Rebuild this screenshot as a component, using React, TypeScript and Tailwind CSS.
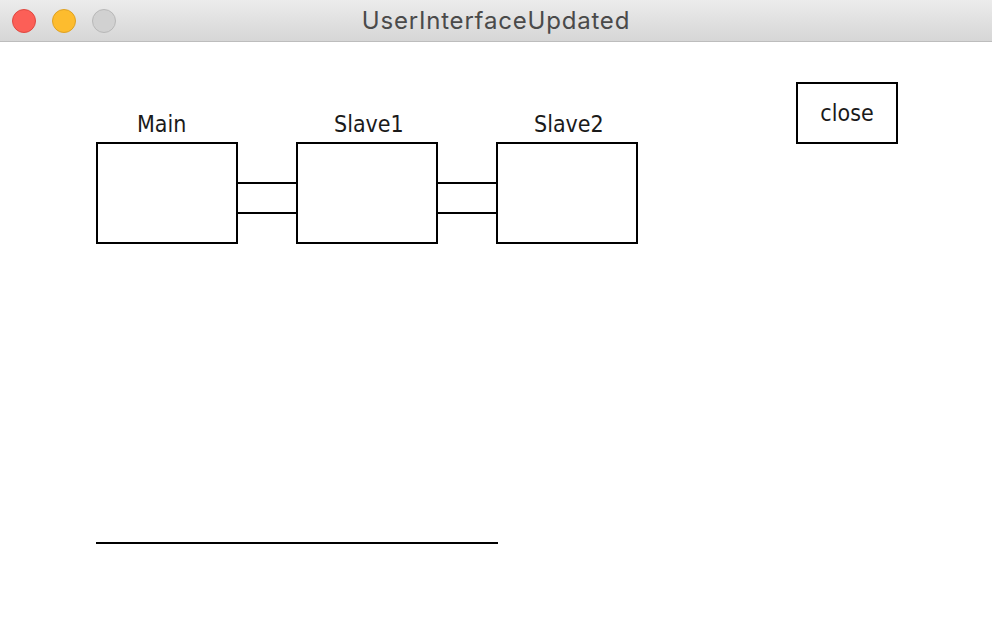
import React from "react";

const labelFont = {
  fontFamily: "'DejaVu Sans Condensed', 'DejaVu Sans', sans-serif",
};

function Node({ label, pad }: { label: string; pad: string }) {
  return (
    <div className="flex flex-col w-[142px]">
      <div
        className={`h-[28px] leading-[28px] text-[23px] text-[#1a1a1a] font-stretch-condensed whitespace-nowrap ${pad}`}
        style={labelFont}
      >
        {label}
      </div>
      <div className="mt-[4px] w-[142px] h-[102px] border-2 border-black bg-white" />
    </div>
  );
}

function Connector() {
  return <div className="w-[58px] h-[32px] mt-[72px] border-y-2 border-black" />;
}

export default function App() {
  return (
    <div className="w-[992px] h-[640px] bg-white overflow-hidden">
      <div className="h-[42px] grid grid-cols-[1fr_auto_1fr] items-center border-b border-[#bdbdbd] bg-gradient-to-b from-[#ececec] to-[#d6d6d6]">
        <div className="flex items-center gap-[16px] pl-[12px]">
          <span className="w-[24px] h-[24px] rounded-full bg-[#fc5f57] border border-[#df4840]" />
          <span className="w-[24px] h-[24px] rounded-full bg-[#fdbc2e] border border-[#dea123]" />
          <span className="w-[24px] h-[24px] rounded-full bg-[#d1d1d1] border border-[#b8b8b8]" />
        </div>
        <div
          className="text-[24px] leading-[28px] text-[#4a4a4a] tracking-[0.8px] whitespace-nowrap"
          style={{ fontFamily: "Inter, 'Liberation Sans', sans-serif" }}
        >
          UserInterfaceUpdated
        </div>
        <div />
      </div>
      <div className="pl-[96px]">
        <div className="flex items-start">
          <div className="flex items-start mt-[68px]">
            <Node label="Main" pad="pl-[41px]" />
            <Connector />
            <Node label="Slave1" pad="pl-[38px]" />
            <Connector />
            <Node label="Slave2" pad="pl-[38px]" />
          </div>
          <div
            className="ml-[158px] mt-[40px] w-[102px] h-[62px] border-2 border-black flex items-center justify-center text-[23px] text-[#1a1a1a] font-stretch-condensed"
            style={labelFont}
          >
            close
          </div>
        </div>
        <div className="mt-[298px] w-[402px] h-[2px] bg-black" />
      </div>
    </div>
  );
}
